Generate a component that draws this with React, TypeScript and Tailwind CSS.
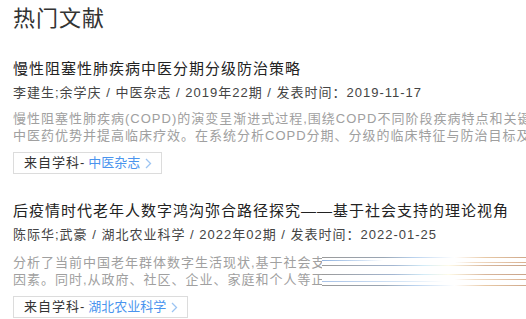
import React from "react";

const font = { fontFamily: '"Liberation Sans", "Noto Sans CJK SC", sans-serif' };

function Chevron() {
  return (
    <svg width="7" height="11" viewBox="0 0 7 11" className="ml-[5px]">
      <path d="M1 1 L5.5 5.5 L1 10" fill="none" stroke="#9cc4f2" strokeWidth="1.3" />
    </svg>
  );
}

function Tag({ name }: { name: string }) {
  return (
    <div className="mt-[8px] flex h-[22px] w-fit items-center border border-[#dcdcdc] pl-[10px] pr-[9px] text-[13px] leading-[20px] text-[#333]">
      <span className="tracking-[1px]">来自学科-</span>
      <span className="ml-[3px] text-[#4a94ee]">{name}</span>
      <Chevron />
    </div>
  );
}

function Artifact({ lines }: { lines: { top: number; cls: string }[] }) {
  return (
    <div className="relative h-[17px] flex-1">
      {lines.map((l, i) => (
        <div key={i} className={"absolute left-0 right-0 h-px " + l.cls} style={{ top: l.top }} />
      ))}
    </div>
  );
}

const full = "bg-[linear-gradient(90deg,#9a9a9a_0%,#9aa6b4_30%,#b9d2ee_45%,#ffffff_65%,#e8c9a6_80%,#cfa98c_100%)]";
const full2 = "bg-[linear-gradient(90deg,#9a9a9a_0%,#a4b7d2_35%,#d4ecf8_50%,#fffbe8_62%,#d9b79c_80%,#c9a48a_100%)]";
const blueShort = "bg-[linear-gradient(90deg,#8fb1de_0%,#cfe0f3_20%,#ffffff_30%,#ffffff_100%)]";
const blueMid = "bg-[linear-gradient(90deg,#a8c2e6_0%,#d6e6f6_40%,#ffffff_60%,#ffffff_100%)]";
const tanRight = "bg-[linear-gradient(90deg,#ffffff_0%,#ffffff_65%,#f2dcc4_75%,#d9b090_100%)]";

export default function App() {
  return (
    <div className="h-[319px] w-[526px] overflow-hidden bg-white pl-[13px]" style={font}>
      <div className="pt-[4px] text-[22px] leading-[30px] tracking-[1px] text-[#333]">热门文献</div>

      <div className="mt-[23px]">
        <div className="text-[15px] leading-[24px] tracking-[1px] text-[#222]">慢性阻塞性肺疾病中医分期分级防治策略</div>
        <div className="whitespace-nowrap text-[13px] leading-[24px] tracking-[1px] text-[#444]">
          李建生;余学庆 / 中医杂志 / 2019年22期 / 发表时间：2019-11-17
        </div>
        <div className="mt-[5px] text-[13px] leading-[17px] tracking-[1px] text-[#a0a0a0]">
          <div className="whitespace-nowrap">慢性阻塞性肺疾病(COPD)的演变呈渐进式过程,围绕COPD不同阶段疾病特点和关键病机</div>
          <div className="whitespace-nowrap">中医药优势并提高临床疗效。在系统分析COPD分期、分级的临床特征与防治目标及</div>
        </div>
        <Tag name="中医杂志" />
      </div>

      <div className="mt-[25px]">
        <div className="text-[15px] leading-[24px] tracking-[1px] text-[#222]">后疫情时代老年人数字鸿沟弥合路径探究——基于社会支持的理论视角</div>
        <div className="whitespace-nowrap text-[13px] leading-[24px] tracking-[1px] text-[#444]">
          陈际华;武豪 / 湖北农业科学 / 2022年02期 / 发表时间：2022-01-25
        </div>
        <div className="mt-[7px] text-[13px] leading-[17px] tracking-[1px] text-[#a0a0a0]">
          <div className="flex">
            <div className="w-[309px] overflow-hidden whitespace-nowrap">分析了当前中国老年群体数字生活现状,基于社会支持</div>
            <Artifact
              lines={[
                { top: 3, cls: full },
                { top: 6, cls: blueShort },
                { top: 8, cls: tanRight },
                { top: 11, cls: full2 },
              ]}
            />
          </div>
          <div className="flex">
            <div className="w-[309px] overflow-hidden whitespace-nowrap">因素。同时,从政府、社区、企业、家庭和个人等正式</div>
            <Artifact
              lines={[
                { top: 3, cls: full2 },
                { top: 8, cls: tanRight },
                { top: 10, cls: blueMid },
                { top: 14, cls: full },
              ]}
            />
          </div>
        </div>
        <Tag name="湖北农业科学" />
      </div>
    </div>
  );
}
